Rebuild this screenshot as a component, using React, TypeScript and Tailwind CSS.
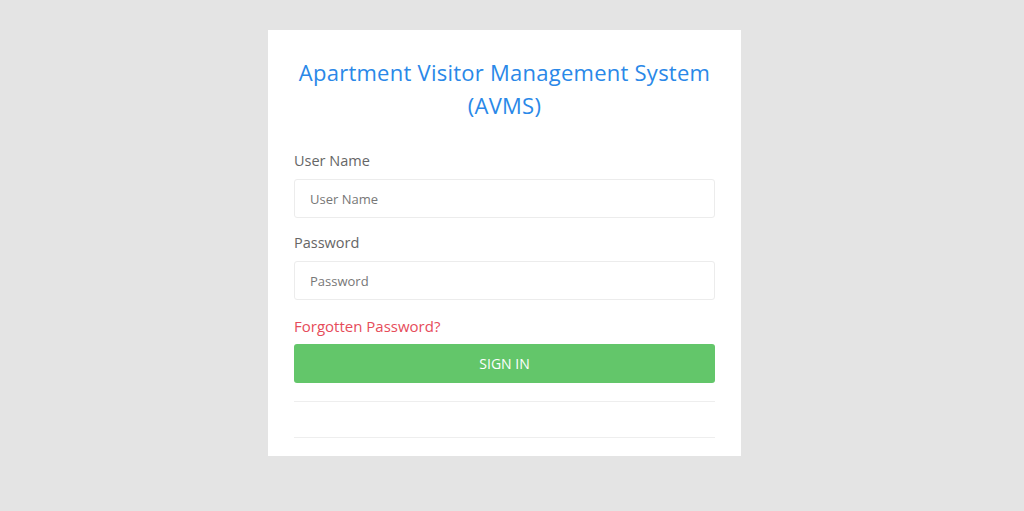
export default function App() {
  return (
    <div
      className="min-h-[511px] w-full bg-[#e4e4e4] pt-[30px] pr-[15px]"
      style={{ fontFamily: '"Open Sans", "Liberation Sans", sans-serif' }}
    >
      <div className="mx-auto w-[473px] bg-white px-[26px] pt-[26px] pb-[18px]">
        <h1 className="text-center text-[22px] leading-[33px] tracking-[0.25px] text-[#2a88e8]">
          Apartment Visitor Management System
          <br />
          (AVMS)
        </h1>

        <form className="mt-[28px]" onSubmit={(e) => e.preventDefault()}>
          <label className="block text-[14.5px] leading-[22px] text-[#666]">User Name</label>
          <input
            placeholder="User Name"
            className="mt-[7px] block h-[39px] w-full rounded-[3px] border border-[#ececec] px-[15px] text-[13px] text-[#555] placeholder:text-[#777] outline-none"
          />

          <label className="mt-[14px] block text-[14.5px] leading-[22px] text-[#666]">Password</label>
          <input
            type="password"
            placeholder="Password"
            className="mt-[7px] block h-[39px] w-full rounded-[3px] border border-[#ececec] px-[15px] text-[13px] text-[#555] placeholder:text-[#777] outline-none"
          />

          <a href="#" className="mt-[15px] block text-[15px] leading-[22px] text-[#e64c5a]">
            Forgotten Password?
          </a>

          <button
            type="submit"
            className="mt-[7px] block h-[39px] w-full rounded-[3px] bg-[#63c66a] text-[14px] font-medium uppercase text-white"
          >
            Sign In
          </button>
        </form>

        <div className="mt-[18px] border-t border-[#eeeeee]" />
        <div className="mt-[35px] border-t border-[#eeeeee]" />
      </div>
    </div>
  );
}
